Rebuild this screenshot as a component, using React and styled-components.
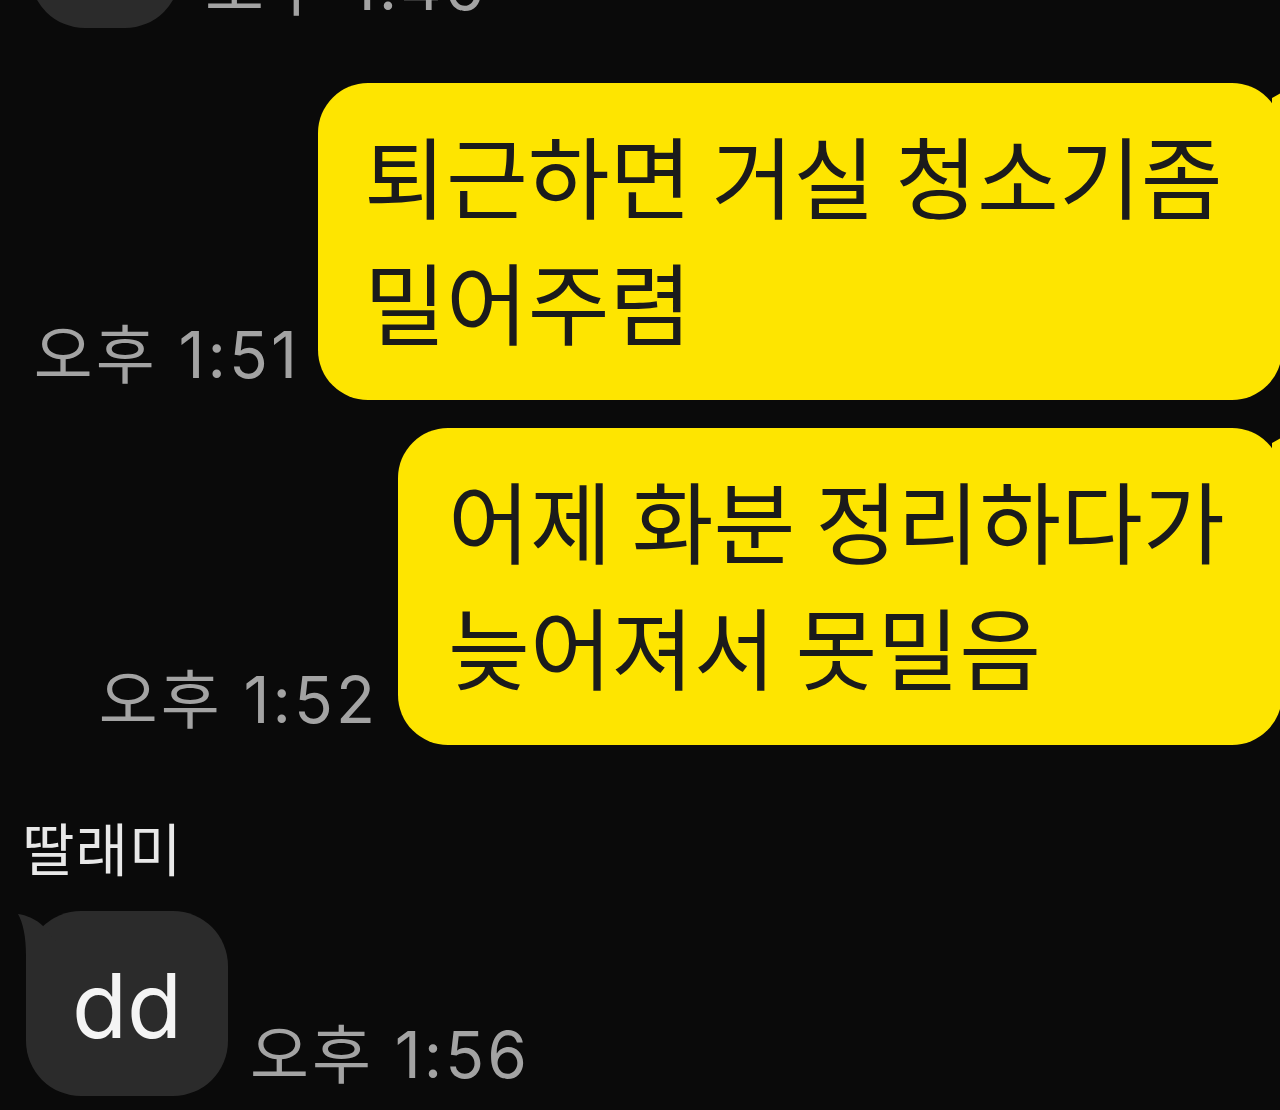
import React from "react";
import styled, { createGlobalStyle } from "styled-components";

const Global = createGlobalStyle`
  html, body { margin: 0; padding: 0; background: #0a0a0a; }
  body { font-family: "Inter", "Noto Sans CJK KR", sans-serif; }
`;

const Page = styled.div`
  width: 1280px;
  height: 1110px;
  overflow: hidden;
  background: #0a0a0a;
  display: flex;
  flex-direction: column;
  font-family: "Inter", "Noto Sans CJK KR", sans-serif;
`;

const Row = styled.div`
  display: flex;
  align-items: flex-end;
  justify-content: ${(p) => (p.$out ? "flex-end" : "flex-start")};
  gap: ${(p) => p.$gap}px;
  margin-top: ${(p) => p.$mt}px;
  margin-right: ${(p) => (p.$out ? -2 : 0)}px;
  padding-left: ${(p) => p.$pl || 0}px;
  flex-shrink: 0;
`;

const OutBubble = styled.div`
  position: relative;
  box-sizing: border-box;
  width: ${(p) => p.$w}px;
  padding: 28px 0 37px ${(p) => p.$pl}px;
  background: #fee500;
  color: #1b1b1b;
  border-radius: 50px;
  font-family: "Noto Sans CJK KR", sans-serif;
  font-size: 89px;
  line-height: 126px;
  white-space: nowrap;
`;

const InBubble = styled.div`
  position: relative;
  box-sizing: border-box;
  width: ${(p) => p.$w}px;
  height: ${(p) => p.$h}px;
  padding-top: ${(p) => p.$pt || 0}px;
  background: #2b2b2b;
  color: #f4f4f4;
  border-radius: 55px;
  font-family: "Inter", "Noto Sans CJK KR", sans-serif;
  font-size: 90px;
  line-height: 90px;
  text-align: center;
`;

const Tail = styled.svg`
  position: absolute;
  overflow: visible;
  ${(p) => (p.$out ? "right: -24px; top: 0;" : "left: 0; top: 0;")}
`;

const Time = styled.span`
  font-family: "Inter", "Noto Sans CJK KR", sans-serif;
  font-size: 64px;
  line-height: 64px;
  letter-spacing: 3px;
  color: #a3a3a3;
  margin-bottom: ${(p) => p.$mb}px;
  white-space: nowrap;
`;

const Name = styled.div`
  margin-top: 73px;
  padding-left: 22px;
  font-family: "Noto Sans CJK KR", sans-serif;
  font-size: 57px;
  line-height: 56px;
  letter-spacing: 1px;
  color: #e8e8e8;
  flex-shrink: 0;
`;

const OutTail = () => (
  <Tail $out width="44" height="60" viewBox="0 0 44 60">
    <path d="M10 15 Q 22 8 44 -4 L 44 60 L 10 60 Z" fill="#fee500" />
  </Tail>
);

const InTail = () => (
  <Tail width="30" height="60" viewBox="0 0 30 60">
    <path d="M17 15 C 10 8 0 4 -8 3 C -3 12 0 25 0 45 L 0 60 L 30 60 L 30 30 Z" fill="#2b2b2b" />
  </Tail>
);

export default function App() {
  return (
    <Page>
      <Global />
      <Row $mt={-122} $gap={25} $pl={30}>
        <InBubble $w={150} $h={150} />
        <Time $mb={9}>오후 1:46</Time>
      </Row>

      <Row $out $mt={55} $gap={18}>
        <Time $mb={13}>오후 1:51</Time>
        <OutBubble $w={964} $pl={46}>
          <OutTail />
          퇴근하면 거실 청소기좀
          <br />
          밀어주렴
        </OutBubble>
      </Row>

      <Row $out $mt={28} $gap={20}>
        <Time $mb={13}>오후 1:52</Time>
        <OutBubble $w={884} $pl={50}>
          <OutTail />
          어제 화분 정리하다가
          <br />
          늦어져서 못밀음
        </OutBubble>
      </Row>

      <Name>딸래미</Name>

      <Row $mt={37} $gap={22} $pl={26}>
        <InBubble $w={202} $h={185} $pt={50}>
          <InTail />
          dd
        </InBubble>
        <Time $mb={9}>오후 1:56</Time>
      </Row>
    </Page>
  );
}
